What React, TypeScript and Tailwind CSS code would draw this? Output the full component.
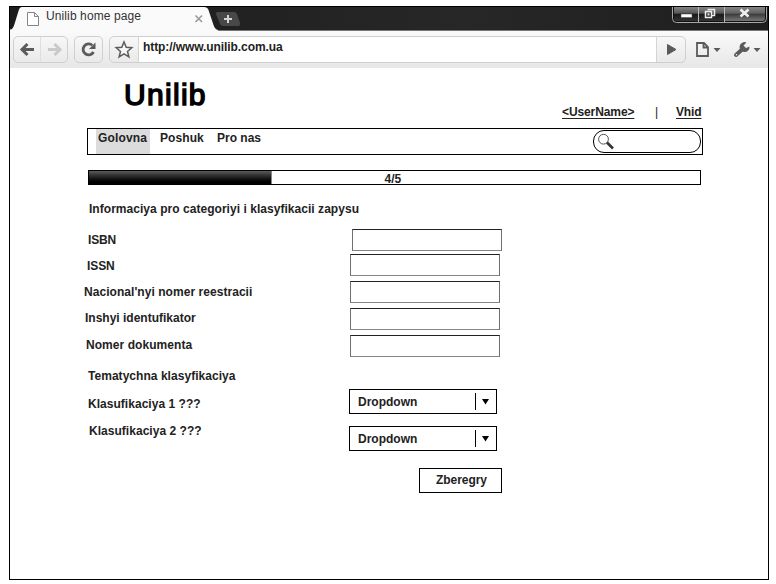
import type { ReactNode } from "react";

function Label({ className, children }: { className: string; children: ReactNode }) {
  return <div className={`h-[14px] leading-[14px] whitespace-nowrap ${className}`}>{children}</div>;
}

function TabStrip() {
  return (
    <div className="relative h-[24px] w-full bg-[#202020]">
      <svg className="block" width="758" height="24" viewBox="0 0 758 24">
        <defs>
          <linearGradient id="strip" x1="0" y1="0" x2="1" y2="0">
            <stop offset="0" stopColor="#1c1c1c" />
            <stop offset="0.6" stopColor="#272727" />
            <stop offset="1" stopColor="#1e1e1e" />
          </linearGradient>
          <linearGradient id="glass" x1="0" y1="0" x2="0" y2="1">
            <stop offset="0" stopColor="#858585" />
            <stop offset="0.45" stopColor="#555" />
            <stop offset="0.5" stopColor="#181818" />
            <stop offset="1" stopColor="#333" />
          </linearGradient>
          <linearGradient id="glassClose" x1="0" y1="0" x2="0" y2="1">
            <stop offset="0" stopColor="#858585" />
            <stop offset="0.45" stopColor="#606060" />
            <stop offset="0.5" stopColor="#3a3a3a" />
            <stop offset="1" stopColor="#777" />
          </linearGradient>
        </defs>
        <rect width="758" height="24" fill="url(#strip)" />
        <rect y="23" width="758" height="1" fill="#777" />
        <path d="M0 24V22.500C2.500 22.500 3.500 20.500 4.500 17L8.500 4Q9.500 0 12 0H194Q197.500 0 198.500 3L203.500 18Q205 22.500 208 23V24Z" fill="#fafafa" />
        <path d="M17.500 5.500h7l4 4v9h-11zM24.500 5.500v4h4" fill="#fff" stroke="#858585" />
        <path d="M185.500 8.500l6.500 6.500M192 8.500l-6.500 6.500" stroke="#999" strokeWidth="1.6" />
        <path d="M208 5H224Q226 5 227 7L230 16Q230.500 19 228 19H213Q211 19 210 17L206 7Q205.500 5 208 5Z" fill="#484848" />
        <path d="M218 8v8M214 12h8" stroke="#d4d4d4" strokeWidth="2" />
        <path d="M662.500 0V11.500Q662.500 15.500 666.500 15.500H752.500Q756.500 15.500 756.500 11.500V0" fill="#111" stroke="#a8a8a8" />
        <path d="M664 0H688V14H667Q664 14 664 11Z" fill="url(#glass)" />
        <rect x="689" width="25" height="14" fill="url(#glass)" />
        <path d="M715 0H755V11Q755 14 752 14H715Z" fill="url(#glassClose)" />
        <path d="M688.500 0V15M714.500 0V15" stroke="#bbb" />
        <rect x="671" y="7" width="11" height="3.500" fill="#fff" stroke="#444" strokeWidth=".5" />
        <path d="M697.500 2.500H704.500V8.500H702M695.500 4.500H701.500V10.500H695.500Z" fill="none" stroke="#eee" strokeWidth="1.500" />
        <rect x="697.500" y="6.500" width="2" height="2" fill="#eee" />
        <path d="M730.500 2.500L738.500 9.500M738.500 2.500L730.500 9.500" stroke="#eee" strokeWidth="2.600" />
      </svg>
      <Label className="absolute left-[36px] top-[2px] text-xs tracking-[0.11px] text-[#333]">Unilib home page</Label>
    </div>
  );
}

function Toolbar() {
  const box = "h-[27px] rounded-[5px] border border-[#cfcfcf] flex items-center";
  return (
    <div className="flex h-[37px] w-full items-start bg-gradient-to-b from-[#fafafa] to-[#e7e7e7] pl-[3px] pt-[5px]">
      <div className={`${box} w-[55px]`}>
        <svg width="53" height="25" viewBox="0 0 53 25" fill="none">
          <path d="M26.500 0V25" stroke="#dedede" />
          <path d="M20 12.500H8.500M13.500 7L8 12.500L13.500 18" stroke="#5b5b5b" strokeWidth="3" />
          <path d="M34 12.500H45.500M40.500 7L46 12.500L40.500 18" stroke="#c9c9c9" strokeWidth="3" />
        </svg>
      </div>
      <div className={`${box} ml-[6px] w-[29px]`}>
        <svg width="27" height="25" viewBox="0 0 27 25" fill="none">
          <path d="M18.500 15A5.500 5.500 0 1 1 17.300 8.300" stroke="#5b5b5b" strokeWidth="2.800" />
          <path d="M20.500 5.500V12H14Z" fill="#5b5b5b" />
        </svg>
      </div>
      <div className={`${box} ml-[6px] w-[577px] overflow-hidden`}>
        <svg className="shrink-0" width="28" height="25" viewBox="0 0 28 25">
          <path d="M14 5L16.200 10.300L21.800 10.700L17.500 14.400L18.900 19.900L14 16.900L9.100 19.900L10.500 14.400L6.200 10.700L11.800 10.300Z" fill="#f6f6f6" stroke="#5b5b5b" strokeWidth="1.500" />
        </svg>
        <div className="h-full w-[519px] border-x border-[#d4d4d4] bg-white pl-[4px] pt-[3px]">
          <Label className="text-xs font-bold tracking-[-0.08px]">http://www.unilib.com.ua</Label>
        </div>
        <svg width="28" height="25" viewBox="0 0 28 25">
          <path d="M10.500 7.500L19 12.500L10.500 17.500Z" fill="#5b5b5b" stroke="#5b5b5b" />
        </svg>
      </div>
      <svg width="72" height="27" viewBox="0 0 72 27" fill="none">
        <path d="M11 7H18L22 11V20H11ZM17.500 7V11.500H22" stroke="#5b5b5b" strokeWidth="1.800" />
        <path d="M27.500 12H34.500L31 16Z" fill="#5b5b5b" />
        <path d="M50 19L56 13.500" stroke="#5b5b5b" strokeWidth="4" strokeLinecap="round" />
        <path d="M60.500 6.500A5 5 0 1 0 63.500 10.500L60 12L57.500 9.500Z" fill="#5b5b5b" />
        <circle cx="50.500" cy="18.700" r=".8" fill="#eee" />
      </svg>
      <svg className="ml-[-5px]" width="10" height="27" viewBox="0 0 10 27">
        <path d="M0.500 12H7.500L4 16Z" fill="#5b5b5b" />
      </svg>
    </div>
  );
}

function Field() {
  return <input className="block h-[22px] w-[150px] border border-x-[#6f6f6f] border-t-[#222] border-b-[#858585] bg-white px-1 outline-none" />;
}

function Dropdown() {
  return (
    <button className="flex h-[25px] w-[148px] items-start border border-black bg-white pl-[8px] text-left">
      <Label className="mt-[5px] w-[117px]">Dropdown</Label>
      <span className="mt-[3px] h-[17px] w-px bg-black" />
      <svg className="ml-[6px] mt-[9px]" width="8" height="6" viewBox="0 0 8 6">
        <path d="M0 0H7L3.500 5.500Z" fill="#000" />
      </svg>
    </button>
  );
}

function Page() {
  return (
    <main className="text-xs font-bold text-[#222]">
      <div className="flex h-[60px] items-start">
        <h1 className="ml-[114px] mt-[10px] w-[438px] text-[30px] font-normal leading-[34px] tracking-[1.3px] text-black [-webkit-text-stroke:1.5px_#000]">Unilib</h1>
        <Label className="mt-[37px] w-[93px] tracking-[-0.1px] underline underline-offset-2">{"<UserName>"}</Label>
        <Label className="mt-[37px] w-[21px] font-normal">|</Label>
        <Label className="mt-[37px] tracking-[-0.15px] underline underline-offset-2">Vhid</Label>
      </div>
      <nav className="ml-[77px] flex h-[27px] w-[616px] items-start border border-black pl-[8px]">
        <div className="h-[25px] w-[54px] bg-[#dcdcdc] pl-[2px] pt-[2px]">
          <Label className="tracking-[0.15px]">Golovna</Label>
        </div>
        <Label className="ml-[10px] mt-[2px] w-[57px] tracking-[0.08px]">Poshuk</Label>
        <Label className="mt-[2px] w-[376px]">Pro nas</Label>
        <div className="mt-px h-[23px] w-[108px] rounded-[11px] border border-black pl-[4px] pt-[2px]">
          <svg width="18" height="18" viewBox="0 0 18 18">
            <circle cx="5.500" cy="6.200" r="4.900" fill="#fff" stroke="#555" />
            <path d="M9 9.500L15 15.500" stroke="#333" strokeWidth="2.600" />
          </svg>
        </div>
      </nav>
      <div className="ml-[78px] mt-[15px] grid h-[15px] w-[613px] grid-cols-[183px_1fr] border border-black">
        <div className="h-[13px] border-r border-[#888] bg-gradient-to-b from-[#5c5c5c] to-black" />
        <Label className="mt-[1px] pl-[112.5px]">4/5</Label>
      </div>
      <Label className="ml-[79px] mt-[17px] tracking-[0.04px]">Informaciya pro categoriyi i klasyfikacii zapysu</Label>
      <div className="mt-[13px] flex items-start">
        <div className="flex w-[339px] flex-col">
          <Label className="ml-[78px] mt-[4px] tracking-[-0.2px]">ISBN</Label>
          <Label className="ml-[77px] mt-[12px] tracking-[-0.1px]">ISSN</Label>
          <Label className="ml-[74px] mt-[12px] tracking-[0.05px]">Nacional'nyi nomer reestracii</Label>
          <Label className="ml-[75px] mt-[12px]">Inshyi identufikator</Label>
          <Label className="ml-[76px] mt-[13px] tracking-[0.06px]">Nomer dokumenta</Label>
          <Label className="ml-[78px] mt-[17px] tracking-[0.04px]">Tematychna klasyfikaciya</Label>
          <Label className="ml-[78px] mt-[14px] tracking-[0.03px]">Klasufikaciya 1 ???</Label>
          <Label className="ml-[79px] mt-[13px] tracking-[0.03px]">Klasufikaciya 2 ???</Label>
        </div>
        <div className="flex flex-col items-start">
          <div className="ml-[3px]"><Field /></div>
          <div className="ml-px mt-[3px] flex flex-col gap-[5px]">
            <Field />
            <Field />
            <Field />
            <Field />
          </div>
          <div className="mt-[32px] flex flex-col gap-[12px]">
            <Dropdown />
            <Dropdown />
          </div>
          <button className="ml-[70px] mt-[17px] flex h-[25px] w-[83px] items-start border border-black bg-white pl-[16px] pt-[4px]">
            <Label className="tracking-[-0.05px]">Zberegry</Label>
          </button>
        </div>
      </div>
    </main>
  );
}

export default function App() {
  return (
    <div className="h-[584px] w-[776px] bg-white pl-[9px] pt-[6px] font-['Liberation_Sans',Arial,sans-serif] text-[#222]">
      <div className="h-[574px] w-[760px] overflow-hidden border border-black bg-white">
        <TabStrip />
        <Toolbar />
        <Page />
      </div>
    </div>
  );
}
